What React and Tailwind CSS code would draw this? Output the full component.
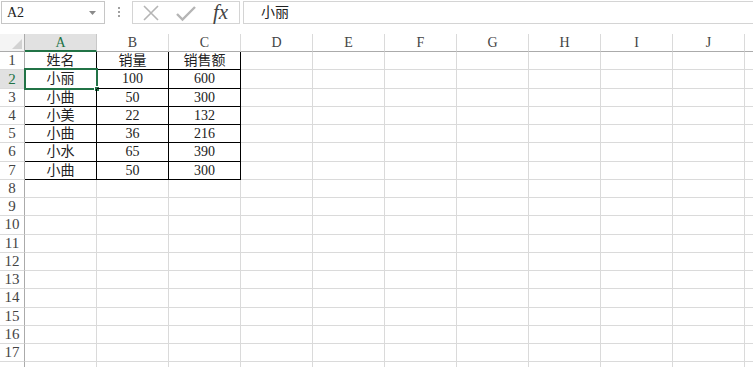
import React from "react";

const cols = ["A", "B", "C", "D", "E", "F", "G", "H", "I", "J"];

const data = [
  ["姓名", "销量", "销售额"],
  ["小丽", "100", "600"],
  ["小曲", "50", "300"],
  ["小美", "22", "132"],
  ["小曲", "36", "216"],
  ["小水", "65", "390"],
  ["小曲", "50", "300"],
];

// 17 numbered rows + one partly visible row with no label
const rows = Array.from({ length: 18 }, (_, i) => i + 1);

const FormulaBar = () => (
  <div className="flex h-[34px] items-start">
    {/* Name box */}
    <div className="ml-px mt-px flex h-[23px] w-[104px] items-center justify-between border border-[#c6c6c6] pl-[5px] pr-[8px] text-[14px] text-[#222]">
      <span>A2</span>
      <svg width="7" height="4" viewBox="0 0 7 4">
        <path d="M0 0h7L3.5 4z" fill="#8a8a8a" />
      </svg>
    </div>

    {/* grip */}
    <div className="ml-[13px] mt-[7px] flex flex-col gap-[2px]">
      {[0, 1, 2].map((i) => (
        <div key={i} className="h-[2px] w-[2px] bg-[#a0a0a0]" />
      ))}
    </div>

    {/* cancel / enter / fx */}
    <div className="ml-[12px] mt-px flex h-[23px] w-[108px] items-center border border-[#d4d4d4]">
      <svg width="18" height="18" viewBox="0 0 18 18" className="ml-[9px]">
        <path d="M2 2L16 16M16 2L2 16" stroke="#b5b5b5" strokeWidth="1.6" />
      </svg>
      <svg width="22" height="18" viewBox="0 0 22 18" className="ml-[15px]">
        <path d="M2 10L7.5 15.5L20 3" stroke="#b5b5b5" strokeWidth="2.4" fill="none" />
      </svg>
      <span className="ml-[16px] font-['Liberation_Serif',serif] text-[21px] italic leading-none text-[#444]">
        fx
      </span>
    </div>

    {/* formula input */}
    <div className="ml-[3px] mt-px flex h-[23px] flex-1 items-center border border-r-0 border-[#d4d4d4] pl-[17px] text-[14px] text-[#222]">
      小丽
    </div>
  </div>
);

const Grid = () => (
  <div className="grid grid-cols-[25px_repeat(10,72px)_1fr] grid-rows-[18px] auto-rows-[18.25px] text-[14px] text-[#222]">
    {/* corner */}
    <div className="relative border-b border-r border-[#ababab] bg-[#f4f4f4]">
      <svg width="10" height="10" viewBox="0 0 10 10" className="absolute bottom-[2px] right-[2px]">
        <path d="M10 0V10H0z" fill="#d2d2d2" />
      </svg>
    </div>
    {cols.map((c) => (
      <div
        key={c}
        className={
          c === "A"
            ? "flex items-center justify-center border-b-2 border-r border-b-[#217346] border-r-[#c8c8c8] bg-[#e1e1e1] text-[#217346]"
            : "flex items-center justify-center border-b border-r border-b-[#ababab] border-r-[#dadada] bg-white text-[#444]"
        }
      >
        {c}
      </div>
    ))}
    <div className="border-b border-[#ababab]" />

    {rows.map((r) => {
      const line = data[r - 1];
      return (
        <React.Fragment key={r}>
          <div
            className={
              r === 2
                ? "flex items-center justify-center border-b border-r border-b-[#dadada] border-r-[#217346] bg-[#e1e1e1] text-[15px] text-[#217346]"
                : "flex items-center justify-center border-b border-r border-b-[#dadada] border-r-[#ababab] text-[15px] leading-none text-[#444]"
            }
          >
            {r <= 17 ? r : ""}
          </div>
          {cols.map((c, ci) => {
            const inTable = line && ci < 3;
            return (
              <div
                key={c}
                className={
                  inTable
                    ? "relative flex items-center justify-center border-b border-r border-black"
                    : "border-b border-r border-[#dadada]"
                }
              >
                {inTable && line[ci]}
                {inTable && r === 2 && ci === 0 && (
                  <>
                    <div className="absolute -left-px -top-[2px] bottom-[-2px] right-[-2px] border-2 border-[#217346]" />
                    <div className="absolute bottom-[-4px] right-[-4px] h-[6px] w-[6px] border border-white bg-[#217346]" />
                  </>
                )}
              </div>
            );
          })}
          <div className="border-b border-[#dadada]" />
        </React.Fragment>
      );
    })}
  </div>
);

export default function App() {
  return (
    <div className="h-[367px] w-[753px] overflow-hidden bg-white font-['Liberation_Serif','Noto_Sans_CJK_SC',serif]">
      <FormulaBar />
      <Grid />
    </div>
  );
}
